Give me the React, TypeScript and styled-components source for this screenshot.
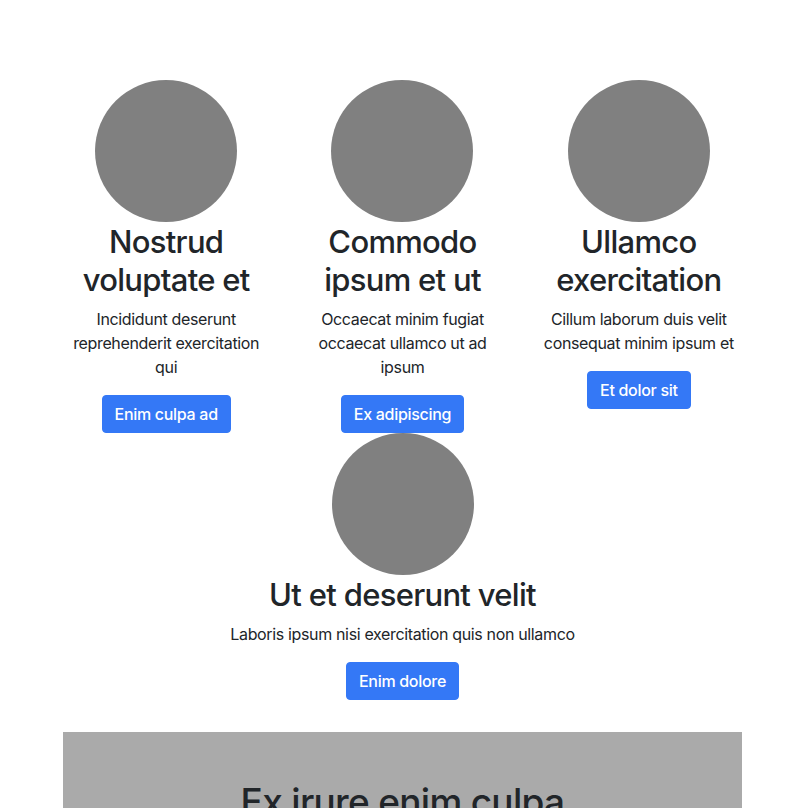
import React from "react";
import styled, { createGlobalStyle } from "styled-components";

const GlobalStyle = createGlobalStyle`
  html, body {
    margin: 0;
    padding: 0;
    background: #fff;
  }
  body {
    font-family: Inter, "Liberation Sans", sans-serif;
    font-size: 16px;
    line-height: 1.5;
    color: #212529;
  }
  * {
    box-sizing: border-box;
  }
`;

const Page = styled.div`
  padding-top: 80px;
`;

const Container = styled.div`
  width: 679px;
  margin: 0 auto;
`;

const Row = styled.div`
  display: flex;
  flex-wrap: wrap;
  justify-content: center;
  margin: 0 -15px;
`;

const Feature = styled.div<{ $wide?: boolean }>`
  flex: 0 0 ${(p) => (p.$wide ? "100%" : "33.3333%")};
  max-width: ${(p) => (p.$wide ? "100%" : "33.3333%")};
  padding: 0 15px;
  text-align: center;
`;

const Avatar = styled.div`
  width: 142px;
  height: 142px;
  margin: 0 auto;
  border-radius: 50%;
  background: #808080;
`;

const Title = styled.h2`
  margin: 0 0 7.8px;
  padding-top: 1px;
  font-size: 31px;
  font-weight: 500;
  line-height: 38px;
  letter-spacing: -0.7px;
`;

const Text = styled.p`
  margin: 0 0 16px;
  font-size: 16px;
  line-height: 24px;
  letter-spacing: -0.35px;
`;

const Button = styled.a`
  display: inline-block;
  padding: 6px 12px;
  border: 1px solid #3478f6;
  border-radius: 4px;
  background: #3478f6;
  color: #fff;
  font-size: 16px;
  font-weight: 500;
  line-height: 24px;
  letter-spacing: -0.3px;
  text-decoration: none;
  vertical-align: top;
`;

const Banner = styled.section`
  margin-top: 32px;
  padding: 48px 24px;
  background: #aaaaaa;
  text-align: center;
`;

const BannerTitle = styled.h1`
  margin: 0 0 8px;
  font-size: 37px;
  font-weight: 500;
  line-height: 1.2;
  letter-spacing: -0.7px;
`;

const BannerText = styled.p`
  margin: 0;
  font-size: 20px;
`;

const features = [
  {
    title: "Nostrud voluptate et",
    text: "Incididunt deserunt reprehenderit exercitation qui",
    action: "Enim culpa ad",
  },
  {
    title: "Commodo ipsum et ut",
    text: "Occaecat minim fugiat occaecat ullamco ut ad ipsum",
    action: "Ex adipiscing",
  },
  {
    title: "Ullamco exercitation",
    text: "Cillum laborum duis velit consequat minim ipsum et",
    action: "Et dolor sit",
  },
  {
    title: "Ut et deserunt velit",
    text: "Laboris ipsum nisi exercitation quis non ullamco",
    action: "Enim dolore",
    wide: true,
  },
];

export default function App() {
  return (
    <>
      <GlobalStyle />
      <Page>
        <Container>
          <Row>
            {features.map((f) => (
              <Feature key={f.title} $wide={f.wide}>
                <Avatar />
                <Title>{f.title}</Title>
                <Text>{f.text}</Text>
                <Button href="#">{f.action}</Button>
              </Feature>
            ))}
          </Row>
          <Banner>
            <BannerTitle>Ex irure enim culpa</BannerTitle>
            <BannerText>Lorem ipsum dolor sit amet</BannerText>
          </Banner>
        </Container>
      </Page>
    </>
  );
}
